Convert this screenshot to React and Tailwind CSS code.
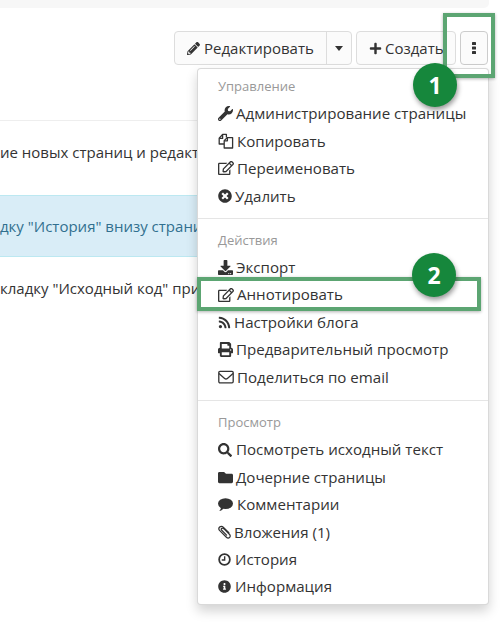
import React from "react";
import {
  FaPencilAlt, FaPlus, FaWrench, FaRegEdit, FaTimesCircle,
  FaDownload, FaRss, FaPrint, FaSearch, FaFolder, FaInfoCircle,
} from "react-icons/fa";

// font-awesome 4 shapes that the package no longer has
const FilesIcon = ({ size }) => (
  <svg width={size} height={size} viewBox="0 0 16 16" fill="none" stroke="currentColor" strokeWidth="1.3" strokeLinejoin="round">
    <path d="M6 11H1.2V5.2L4.6 1.4H8.4V4.6" />
    <path d="M1.4 5.4H4.6V1.6" />
    <path d="M6.2 15V7.6L9.2 4.6H14.6V15Z" />
    <path d="M6.4 7.8H9.4V4.8" />
  </svg>
);

const EnvelopeIcon = ({ size }) => (
  <svg width={size} height={size} viewBox="0 0 16 16" fill="none" stroke="currentColor" strokeWidth="1.3" strokeLinejoin="round">
    <rect x="0.8" y="2.4" width="14.4" height="11.4" rx="1.2" />
    <path d="M1 4.6L6.6 9.4C7.4 10.1 8.6 10.1 9.4 9.4L15 4.6" />
  </svg>
);

const CommentIcon = ({ size }) => (
  <svg width={size} height={size} viewBox="0 0 16 16" fill="currentColor">
    <ellipse cx="8" cy="7" rx="8" ry="5.8" />
    <path d="M3.4 10.5L5.6 12.2C4.8 13.6 3.2 14.6 1.4 14.8C2.6 13.6 3.2 12.2 3.4 10.5Z" />
  </svg>
);

const ClipIcon = ({ size }) => (
  <svg width={size} height={size} viewBox="0 0 16 16" fill="none" stroke="currentColor" strokeWidth="1.4" strokeLinecap="round">
    <path d="M6 3.6L13 10.6C14.4 12 14.2 13.4 13.2 14.3C12.2 15.2 10.8 15.2 9.6 14L2 6.4C0.8 5.2 0.8 3.4 1.9 2.3C3 1.2 4.8 1.2 6 2.4L12.4 8.8" />
    <path d="M9.8 11.6L4.2 6C3.5 5.3 3.5 4.5 4 4C4.5 3.5 5.3 3.5 6 4.2" />
  </svg>
);

const ClockIcon = ({ size }) => (
  <svg width={size} height={size} viewBox="0 0 16 16" fill="none" stroke="currentColor">
    <circle cx="8" cy="8" r="6.6" strokeWidth="2.2" />
    <path d="M8.2 4V8.6H4.6" strokeWidth="1.7" />
  </svg>
);

const KebabIcon = () => (
  <svg width="4" height="12" viewBox="0 0 4 12" fill="currentColor">
    <rect width="4" height="3" rx="0.6" />
    <rect y="4.5" width="4" height="3" rx="0.6" />
    <rect y="9" width="4" height="3" rx="0.6" />
  </svg>
);

const sections = [
  {
    title: "Управление",
    items: [
      { icon: FaWrench, label: "Администрирование страницы", slot: "w-[18px]", size: 15 },
      { icon: FilesIcon, label: "Копировать", slot: "w-[19px]", size: 16 },
      { icon: FaRegEdit, label: "Переименовать", slot: "w-[19px]", size: 16 },
      { icon: FaTimesCircle, label: "Удалить", slot: "w-[17px]", size: 14 },
    ],
  },
  {
    title: "Действия",
    items: [
      { icon: FaDownload, label: "Экспорт", slot: "w-[18px]", size: 15 },
      { icon: FaRegEdit, label: "Аннотировать", slot: "w-[19px]", size: 16 },
      { icon: FaRss, label: "Настройки блога", slot: "w-[16px]", size: 13 },
      { icon: FaPrint, label: "Предварительный просмотр", slot: "w-[18px]", size: 15 },
      { icon: EnvelopeIcon, label: "Поделиться по email", slot: "w-[19px]", size: 16 },
    ],
  },
  {
    title: "Просмотр",
    items: [
      { icon: FaSearch, label: "Посмотреть исходный текст", slot: "w-[18px]", size: 14 },
      { icon: FaFolder, label: "Дочерние страницы", slot: "w-[18px]", size: 15 },
      { icon: CommentIcon, label: "Комментарии", slot: "w-[19px]", size: 15 },
      { icon: ClipIcon, label: "Вложения (1)", slot: "w-[16px]", size: 14 },
      { icon: ClockIcon, label: "История", slot: "w-[17px]", size: 13 },
      { icon: FaInfoCircle, label: "Информация", slot: "w-[17px]", size: 13 },
    ],
  },
];

const MenuSection = ({ section }) => (
  <div>
    <div className="flex h-[26.5px] items-center text-[13px] text-[#999]">{section.title}</div>
    {section.items.map((item) => (
      <div key={item.label} className="flex h-[27.4px] items-center whitespace-nowrap text-[#333]">
        <span className={`${item.slot} shrink-0`}>
          <item.icon size={item.size} />
        </span>
        {item.label}
      </div>
    ))}
  </div>
);

const Badge = ({ n, className }) => (
  <div className={`absolute flex h-[44px] w-[44px] items-center justify-center rounded-full bg-[#16873c] text-[23px] font-bold text-white shadow-[1px_3px_5px_rgba(0,0,0,0.4)] ${className}`}>
    {n}
  </div>
);

export default function App() {
  return (
    <div className="relative h-[623px] w-[504px] overflow-hidden bg-white font-['Open_Sans',sans-serif] text-[15px] text-[#333]">
      <div className="h-[8px] w-[489px] rounded-br-[5px] bg-[#f7f7f7]" />

      <div className="mt-[23px] flex h-[34px] justify-end gap-[4px] pr-[16px]">
        <div className="flex rounded-[4px] border border-[#ddd] bg-[#fbfbfb]">
          <div className="flex w-[152px] items-center gap-[4px] border-r border-[#ddd] pl-[12px]">
            <FaPencilAlt size={13} />
            Редактировать
          </div>
          <div className="flex w-[24px] items-center justify-center">
            <svg width="8" height="5" viewBox="0 0 8 5" fill="currentColor"><path d="M0 0H8L4 5Z" /></svg>
          </div>
        </div>
        <div className="flex w-[100px] items-center gap-[3px] rounded-[4px] border border-[#ddd] bg-[#fbfbfb] pl-[12px]">
          <FaPlus size={13} />
          Создать
        </div>
        <div className="flex w-[28px] items-center justify-center rounded-[4px] border border-[#ccc] bg-[#fbfbfb]">
          <KebabIcon />
        </div>
      </div>

      <div className="mt-[55px] w-[489px] border-t border-[#eee]">
        <div className="mt-[20px] h-[54px] whitespace-nowrap">ие новых страниц и редакт</div>
        <div className="flex h-[62px] items-center whitespace-nowrap border-y border-[#bce8f1] bg-[#d9edf7] text-[#31708f]">
          дку "История" внизу страни
        </div>
        <div className="mt-[20px] whitespace-nowrap">кладку "Исходный код" при</div>
      </div>

      <div className="absolute left-[197px] top-[68px] h-[537px] w-[292px] rounded-[4px] border border-black/15 bg-white pl-[20px] pt-[4.5px] text-[15.1px] shadow-[0_6px_12px_rgba(0,0,0,0.175)]">
        {sections.map((section, i) => (
          <React.Fragment key={section.title}>
            {i === 1 && <div className="mb-[8.5px] mt-[8px] ml-[-20px] h-px bg-[#e5e5e5]" />}
            {i === 2 && <div className="mb-[9px] mt-[9px] ml-[-20px] h-px bg-[#e5e5e5]" />}
            <MenuSection section={section} />
          </React.Fragment>
        ))}
      </div>

      <div className="absolute left-[443px] top-[13px] h-[65px] w-[52px] border-[4px] border-[#5ca572] shadow-[0_1px_3px_rgba(0,0,0,0.3)]" />
      <div className="absolute left-[197px] top-[277px] h-[34px] w-[284px] border-[4px] border-[#5ca572] shadow-[0_1px_3px_rgba(0,0,0,0.3)]" />
      <Badge n="1" className="left-[413px] top-[63px]" />
      <Badge n="2" className="left-[412px] top-[253px]" />
    </div>
  );
}
